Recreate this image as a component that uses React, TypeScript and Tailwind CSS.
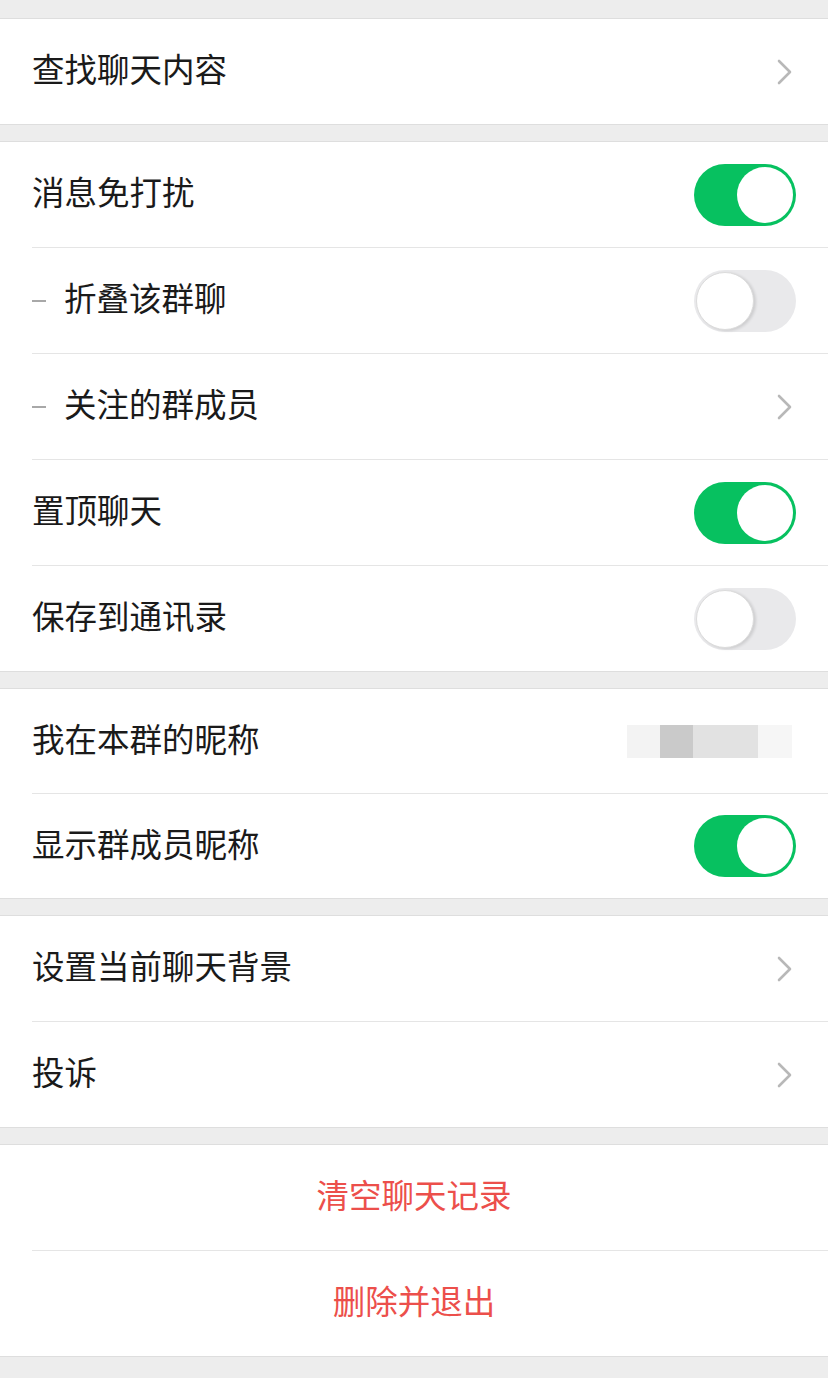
import { Fragment } from "react";

type Row =
  | { label: string; kind: "link"; sub?: boolean }
  | { label: string; kind: "toggle"; on: boolean; sub?: boolean }
  | { label: string; kind: "nickname" }
  | { label: string; kind: "danger" };

const sections: Row[][] = [
  [{ label: "查找聊天内容", kind: "link" }],
  [
    { label: "消息免打扰", kind: "toggle", on: true },
    { label: "折叠该群聊", kind: "toggle", on: false, sub: true },
    { label: "关注的群成员", kind: "link", sub: true },
    { label: "置顶聊天", kind: "toggle", on: true },
    { label: "保存到通讯录", kind: "toggle", on: false },
  ],
  [
    { label: "我在本群的昵称", kind: "nickname" },
    { label: "显示群成员昵称", kind: "toggle", on: true },
  ],
  [
    { label: "设置当前聊天背景", kind: "link" },
    { label: "投诉", kind: "link" },
  ],
  [
    { label: "清空聊天记录", kind: "danger" },
    { label: "删除并退出", kind: "danger" },
  ],
];

function Chevron() {
  return (
    <svg width="18" height="28" viewBox="0 0 18 28" className="mr-[34px]">
      <path
        d="M3 3 L14 14 L3 25"
        fill="none"
        stroke="#b8b8b8"
        strokeWidth="2.6"
        strokeLinecap="round"
        strokeLinejoin="round"
      />
    </svg>
  );
}

function Toggle({ on }: { on: boolean }) {
  if (on) {
    return (
      <div className="mr-8 flex h-[62px] w-[102px] items-center justify-end rounded-full bg-[#07c160] px-[3px]">
        <div className="size-[56px] rounded-full bg-white" />
      </div>
    );
  }
  return (
    <div className="mr-8 flex h-[62px] w-[102px] items-center justify-start rounded-full bg-[#e9e9eb] px-[2px]">
      <div className="size-[58px] rounded-full border border-[#dcdcdc] bg-white shadow-[2px_1px_3px_rgba(0,0,0,0.12)]" />
    </div>
  );
}

function Nickname() {
  return (
    <div className="mr-9 flex h-[33px]">
      <div className="w-[33px] bg-[#f3f3f3]" />
      <div className="w-[33px] bg-[#cacaca]" />
      <div className="w-[65px] bg-[#e2e2e2]" />
      <div className="w-[34px] bg-[#f6f6f6]" />
    </div>
  );
}

function Item({ row, tall }: { row: Row; tall: boolean }) {
  const h = tall ? "h-[105px]" : "h-[104px]";
  if (row.kind === "danger") {
    return (
      <div
        className={`flex ${h} items-center justify-center pb-1.5 text-[32.5px] text-[#ec4f4b]`}
      >
        {row.label}
      </div>
    );
  }
  const sub = "sub" in row && row.sub;
  return (
    <div className={`flex ${h} items-center justify-between`}>
      <div className="flex items-center pb-1.5 pl-8 text-[32.5px] text-[#1a1a1a]">
        {sub && <span className="mr-[18px] mt-1.5 h-[2px] w-[14px] bg-[#a8a8a8]" />}
        {row.label}
      </div>
      {row.kind === "link" && <Chevron />}
      {row.kind === "toggle" && <Toggle on={row.on} />}
      {row.kind === "nickname" && <Nickname />}
    </div>
  );
}

export default function App() {
  return (
    <div
      className="min-h-[1378px] w-full bg-[#ededed] pt-[18px]"
      style={{ fontFamily: '"Noto Sans CJK SC", "Noto Sans", sans-serif' }}
    >
      {sections.map((rows, i) => (
        <div key={i} className="mb-4 border-y border-[#dedede] bg-white">
          {rows.map((row, j) => (
            <Fragment key={row.label}>
              {j > 0 && <div className="ml-8 h-px bg-[#e5e5e5]" />}
              <Item row={row} tall={i !== 2} />
            </Fragment>
          ))}
        </div>
      ))}
    </div>
  );
}
